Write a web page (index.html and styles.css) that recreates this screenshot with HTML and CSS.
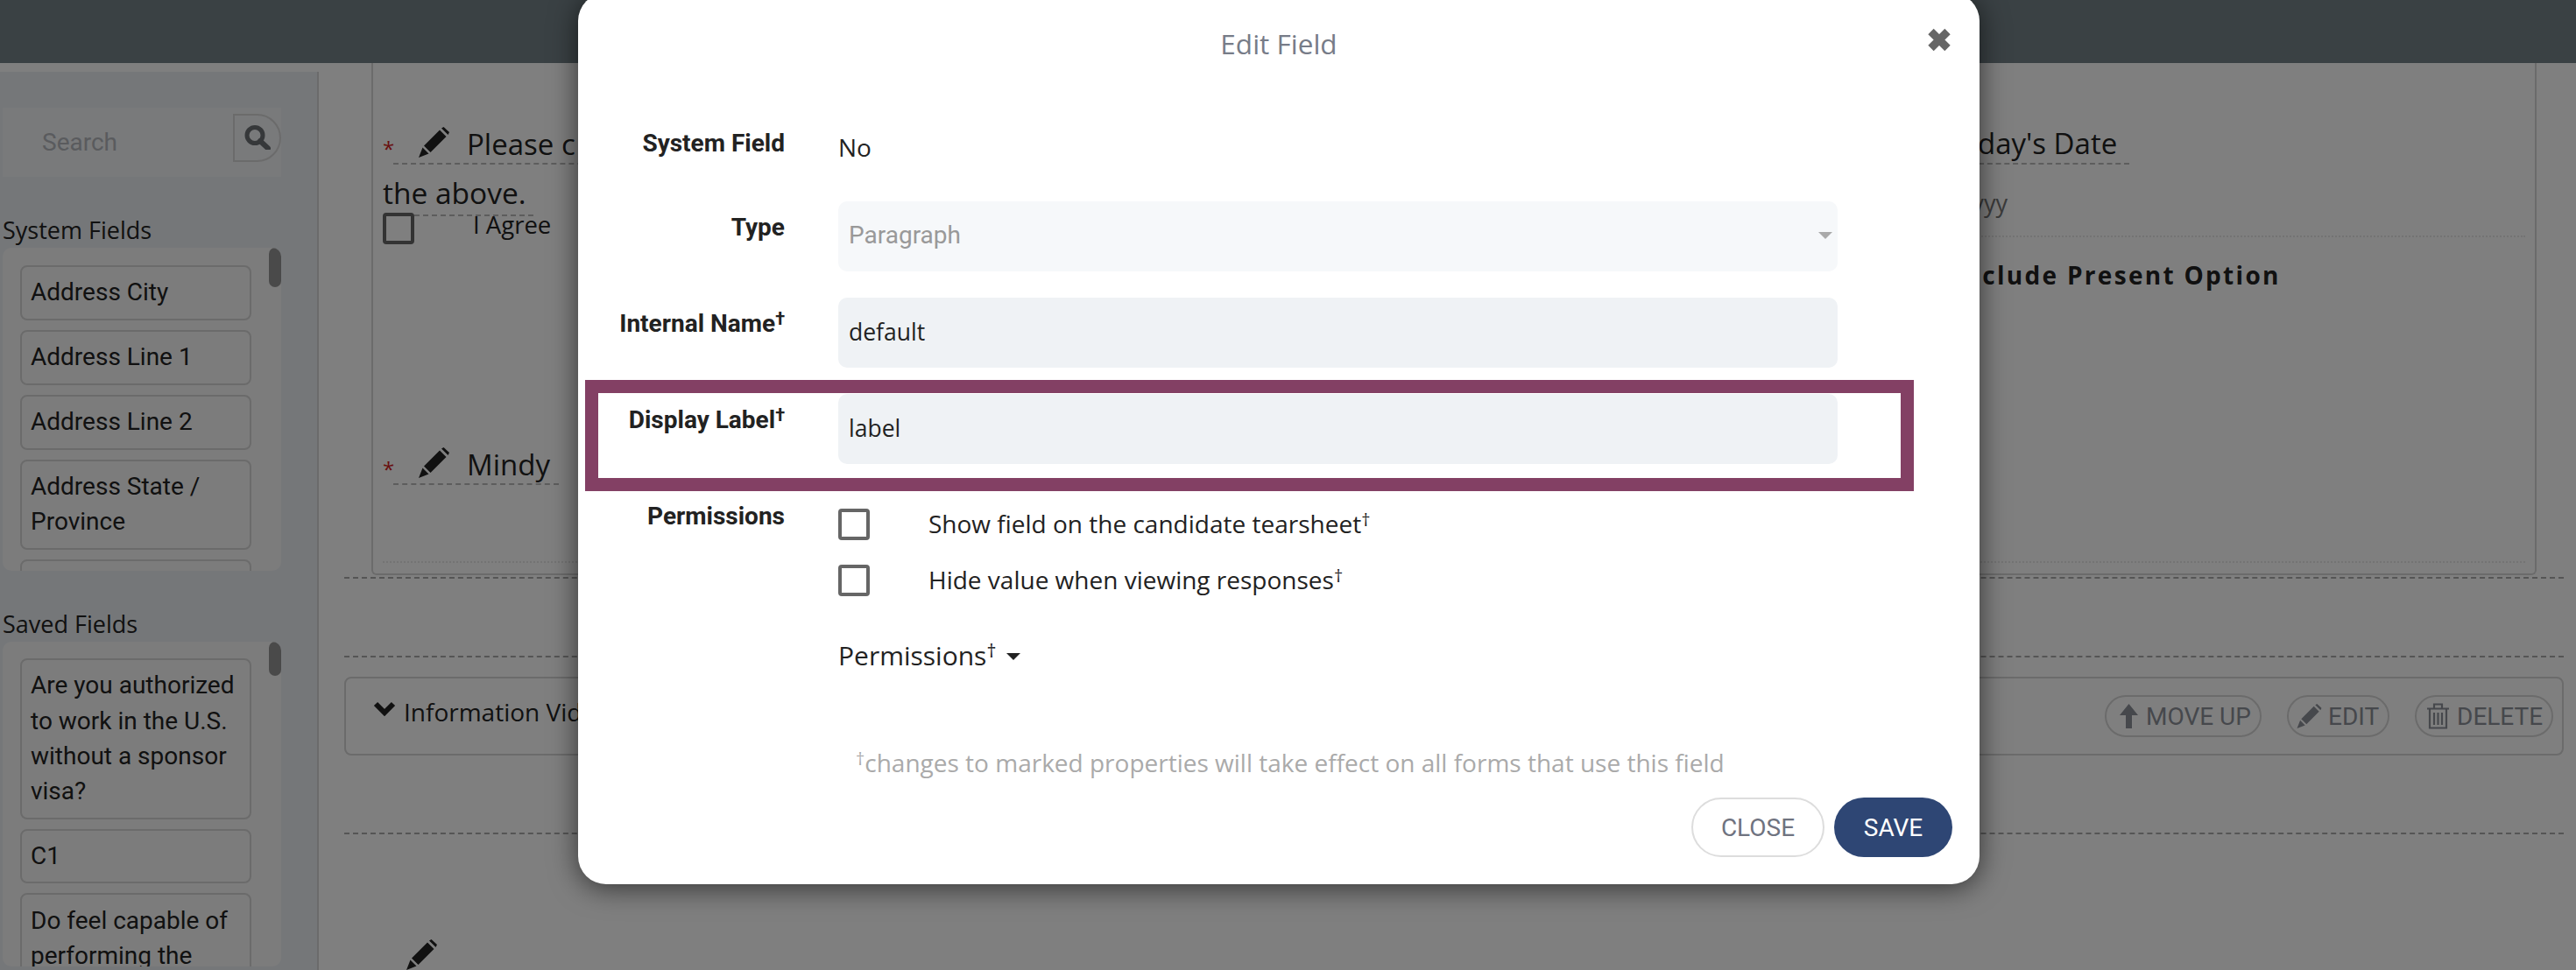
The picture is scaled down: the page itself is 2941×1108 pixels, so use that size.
FILE: index.html
```html
<!DOCTYPE html>
<html lang="en">
<head>
    <meta charset="UTF-8">
    <title>Edit Field</title>
    <link rel="stylesheet" href="styles.css">
</head>
<body>
    <header class="topbar"></header>

    <div class="page">
        <aside class="sidebar">
            <div class="search-box">
                <span class="search-text">Search</span>
                <span class="search-btn">
                    <svg width="30" height="28" viewBox="0 0 30 28"><circle cx="12" cy="11.5" r="9" fill="none" stroke="currentColor" stroke-width="5"/><path d="M18 18l9 8.5" fill="none" stroke="currentColor" stroke-width="6" stroke-linecap="round"/></svg>
                </span>
            </div>

            <h3 class="side-title">System Fields</h3>
            <div class="field-list">
                <span class="thumb"></span>
                <div class="field-item">Address City</div>
                <div class="field-item">Address Line 1</div>
                <div class="field-item">Address Line 2</div>
                <div class="field-item">Address State / Province</div>
                <div class="field-item field-clipped"></div>
            </div>

            <h3 class="side-title">Saved Fields</h3>
            <div class="field-list saved-list">
                <span class="thumb"></span>
                <div class="field-item">Are you authorized to work in the U.S. without a sponsor visa?</div>
                <div class="field-item">C1</div>
                <div class="field-item">Do feel capable of performing the</div>
            </div>
        </aside>

        <main class="main">
            <section class="section">
                <div class="form-box">
                    <div class="form-columns">
                        <div class="left-col">
                            <div class="question">
                                <span class="req">*</span>
                                <span class="question-line">
                                    <svg class="pencil" width="35" height="35" viewBox="0 0 35 35"><path d="M0 35l4.500-11.500 7 7zM6 21.500L24 3.500l7.500 7.500-18 18zM26 1.500L28.500 0 35 6l-1.500 3z"/></svg>
                                    <span class="question-text">Please c</span>
                                </span>
                            </div>
                            <div class="question-rest">the above.</div>
                            <div class="option">
                                <span class="checkbox"></span>
                                <span class="option-label">I Agree</span>
                            </div>
                            <div class="question second">
                                <span class="req">*</span>
                                <span class="question-line short">
                                    <svg class="pencil" width="35" height="35" viewBox="0 0 35 35"><path d="M0 35l4.500-11.500 7 7zM6 21.500L24 3.500l7.500 7.500-18 18zM26 1.500L28.500 0 35 6l-1.500 3z"/></svg>
                                    <span class="question-text">Mindy</span>
                                </span>
                            </div>
                        </div>
                        <div class="right-col">
                            <div class="date-title"><span class="date-label">Today's Date</span></div>
                            <div class="date-input">mm/dd/yyyy</div>
                            <div class="date-option">Include Present Option</div>
                        </div>
                    </div>
                </div>
            </section>

            <section class="section spacer"></section>

            <section class="section card-wrap">
                <div class="info-card">
                    <div class="card-title">
                        <svg width="26" height="17" viewBox="0 0 26 17"><path d="M3 3l10 10L23 3" fill="none" stroke="currentColor" stroke-width="6"/></svg>
                        <span>Information Vid</span>
                    </div>
                    <div class="card-actions">
                        <span class="pill pill-move">
                            <svg width="21" height="28" viewBox="0 0 21 28"><path d="M10.500 0L21 13h-7v15H7V13H0z"/></svg>
                            MOVE UP
                        </span>
                        <span class="pill pill-edit">
                            <svg width="29" height="28" viewBox="0 0 35 35"><path d="M0 35l4.500-11.500 7 7zM6 21.500L24 3.500l7.500 7.500-18 18zM26 1.500L28.500 0 35 6l-1.500 3z"/></svg>
                            EDIT
                        </span>
                        <span class="pill pill-delete">
                            <svg width="25" height="30" viewBox="0 0 25 30"><path d="M0 6.500h25M8 6V1.500h9V6M3 7v21.500h19V7M8 11v14M12.500 11v14M17 11v14" fill="none" stroke="currentColor" stroke-width="2.200"/></svg>
                            DELETE
                        </span>
                    </div>
                </div>
            </section>

            <div class="bottom-row">
                <svg class="pencil" width="35" height="35" viewBox="0 0 35 35"><path d="M0 35l4.500-11.500 7 7zM6 21.500L24 3.500l7.500 7.500-18 18zM26 1.500L28.500 0 35 6l-1.500 3z"/></svg>
            </div>
        </main>
    </div>

    <div class="overlay"></div>

    <div class="modal">
        <div class="modal-title">Edit Field</div>
        <span class="modal-x">
            <svg width="28" height="27" viewBox="0 0 28 27"><path d="M4.500 4l19 19M23.500 4l-19 19" fill="none" stroke="currentColor" stroke-width="9"/></svg>
        </span>

        <div class="row row-first">
            <label class="row-label">System Field</label>
            <div class="row-value">No</div>
        </div>
        <div class="row">
            <label class="row-label">Type</label>
            <div class="control select">Paragraph<span class="select-arrow"></span></div>
        </div>
        <div class="row">
            <label class="row-label">Internal Name<sup>†</sup></label>
            <div class="control">default</div>
        </div>
        <div class="row">
            <label class="row-label">Display Label<sup>†</sup></label>
            <div class="control">label</div>
        </div>
        <div class="row">
            <label class="row-label">Permissions</label>
            <div class="checks">
                <div class="check-row"><span class="checkbox"></span><span class="check-text">Show field on the candidate tearsheet<sup>†</sup></span></div>
                <div class="check-row"><span class="checkbox"></span><span class="check-text">Hide value when viewing responses<sup>†</sup></span></div>
                <div class="perm-toggle"><span>Permissions<sup>†</sup></span><span class="caret"></span></div>
                <div class="note"><sup>†</sup>changes to marked properties will take effect on all forms that use this field</div>
            </div>
        </div>

        <div class="modal-footer">
            <button class="btn btn-close">CLOSE</button>
            <button class="btn btn-save">SAVE</button>
        </div>

        <div class="callout"></div>
    </div>
</body>
</html>
```
FILE: styles.css
```css
/* Basic reset */
* {
    margin: 0;
    padding: 0;
    box-sizing: border-box;
}

body {
    width: 2941px;
    height: 1108px;
    overflow: hidden;
    position: relative;
    background-color: #fff;
    color: #222;
    font-family: "Open Sans", sans-serif;
    font-size: 28px;
}

sup {
    font-size: 72%;
    line-height: 0;
    vertical-align: 0.42em;
}

.topbar {
    height: 72px;
    background-color: #748288;
}

.page {
    display: flex;
    height: 1036px;
}

/* Left sidebar */
.sidebar {
    width: 364px;
    flex-shrink: 0;
    margin-top: 10px;
    padding: 41px 41px 0 3px;
    background-color: #eaeef3;
    border-right: 2px solid #d6d6d6;
    font-family: Roboto, sans-serif;
}

.search-box {
    display: flex;
    align-items: center;
    justify-content: space-between;
    height: 79px;
    background-color: #f2f4f7;
    padding-left: 45px;
}

.search-text {
    color: #b4b7bc;
    font-size: 28px;
}

.search-btn {
    display: flex;
    align-items: center;
    justify-content: center;
    width: 55px;
    height: 55px;
    margin-top: -11px;
    border: 2px solid #d6d6d6;
    border-radius: 0 50% 50% 0;
    color: #6c7074;
}

.side-title {
    height: 40px;
    margin-top: 41px;
    line-height: 40px;
    font-family: "Open Sans", sans-serif;
    font-size: 27px;
    font-weight: 400;
}

.field-list {
    position: relative;
    height: 369px;
    padding: 20px 34px 0 20px;
    overflow: hidden;
    background-color: #f9f9f9;
    border-radius: 10px;
}

.saved-list {
    height: 371px;
    padding-top: 19px;
}

.thumb {
    position: absolute;
    top: 0;
    right: 0;
    width: 14px;
    height: 45px;
    border-radius: 7px;
    background-color: #959595;
}

.saved-list .thumb {
    height: 39px;
}

.field-item {
    margin-bottom: 11px;
    padding: 9.35px 10px;
    border: 2px solid #d6d6d6;
    border-radius: 8px;
    font-size: 28px;
    line-height: 40.2px;
}

.field-clipped {
    height: 63px;
}

/* Main column */
.main {
    flex: 1;
    padding: 0 14px 0 29px;
}

.section {
    border-bottom: 2px dashed #aaa;
}

.form-box {
    height: 585px;
    margin: 0 31px 2px;
    padding: 0 11px;
    border: 2px solid #d6d6d6;
    border-top: none;
    border-radius: 0 0 6px 6px;
}

.form-columns {
    display: flex;
    justify-content: space-between;
    height: 571px;
    padding-top: 70px;
    border-bottom: 2px dotted #e6e6e6;
}

.left-col {
    width: 1100px;
}

.question {
    display: flex;
    align-items: flex-start;
}

.req {
    width: 12px;
    margin-top: 5px;
    color: #d21f1f;
    font-size: 24px;
    line-height: 46px;
}

.question-line {
    display: flex;
    flex: 1;
    align-items: center;
    height: 46px;
    padding-left: 29px;
    border-bottom: 2px dashed #bbb;
}

.question-line.short {
    flex: none;
    width: 189px;
}

.pencil {
    flex-shrink: 0;
    margin-top: -4px;
    fill: #222;
}

.question-text {
    margin-left: 20px;
    font-size: 33px;
    white-space: nowrap;
}

.question-rest {
    height: 50px;
    padding-top: 2px;
    font-size: 33.5px;
    line-height: 50px;
}

.option {
    display: flex;
    align-items: flex-start;
    height: 36px;
}

.option-label {
    width: 136px;
    height: 36px;
    padding-left: 67px;
    margin-top: 2px;
    border-top: 2px dashed #bbb;
    font-size: 27.5px;
    line-height: 20px;
    white-space: nowrap;
}

.checkbox {
    display: inline-block;
    flex-shrink: 0;
    width: 36px;
    height: 36px;
    border: 4px solid #666;
    border-radius: 4px;
}

.question.second {
    margin-top: 229px;
}

.right-col {
    width: 780px;
}

.date-title {
    height: 46px;
    padding-left: 117px;
}

.date-label {
    display: inline-block;
    height: 46px;
    padding-right: 14px;
    border-bottom: 2px dashed #bbb;
    font-size: 33px;
    line-height: 44px;
    white-space: nowrap;
}

.date-input {
    height: 83px;
    padding: 21px 0 0 32px;
    border-bottom: 2px dotted #e6e6e6;
    color: #777;
    font-size: 27px;
    line-height: 46px;
}

.date-option {
    margin-top: 24px;
    padding-left: 128px;
    font-size: 28px;
    font-weight: 700;
    letter-spacing: 2.3px;
    white-space: nowrap;
}

.spacer {
    height: 90px;
}

.card-wrap {
    height: 202px;
    padding-top: 22px;
}

.info-card {
    display: flex;
    align-items: center;
    justify-content: space-between;
    height: 90px;
    padding: 0 10px 0 31px;
    border: 2px solid #d6d6d6;
    border-radius: 8px;
}

.card-title {
    display: flex;
    align-items: center;
    gap: 9px;
    margin-top: -10px;
    font-size: 28px;
}

.card-title svg {
    margin-top: -8px;
}

.card-actions {
    display: flex;
    gap: 29px;
}

.pill {
    display: flex;
    align-items: center;
    height: 48px;
    border: 2px solid #d6d6d6;
    border-radius: 24px;
    color: #8c9099;
    font-family: Roboto, sans-serif;
    font-size: 28px;
    fill: #8c9099;
    white-space: nowrap;
}

.pill-move {
    width: 179px;
    padding-left: 15px;
    gap: 9px;
}

.pill-edit {
    width: 117px;
    padding-left: 9px;
    gap: 7px;
}

.pill-delete {
    width: 158px;
    padding-left: 12px;
    gap: 9px;
}

.bottom-row {
    padding: 120px 0 0 71px;
}

.bottom-row .pencil {
    margin-top: 0;
}

/* Overlay and modal */
.overlay {
    position: absolute;
    top: 0;
    left: 0;
    width: 100%;
    height: 100%;
    background-color: rgba(0, 0, 0, 0.5);
}

.modal {
    position: absolute;
    top: -8px;
    left: 660px;
    width: 1600px;
    height: 1018px;
    background-color: #fff;
    border-radius: 32px;
    box-shadow: 0 4px 32px rgba(0, 0, 0, 0.6);
}

.modal-title {
    height: 116px;
    padding-top: 36px;
    text-align: center;
    color: #777c88;
    font-size: 31.5px;
    line-height: 44px;
}

.modal-x {
    position: absolute;
    top: 40px;
    right: 32px;
    color: #666;
    line-height: 0;
}

.row {
    display: grid;
    grid-template-columns: 236px 1141px;
    column-gap: 61px;
    margin-top: 30px;
}

.row-first {
    height: 66px;
    margin-top: 26px;
}

.row-label {
    padding-top: 10px;
    text-align: right;
    font-family: Roboto, sans-serif;
    font-size: 28px;
    font-weight: 700;
    line-height: 40px;
    white-space: nowrap;
}

.row-value {
    padding-top: 14px;
    line-height: 40px;
}

.control {
    position: relative;
    height: 80px;
    padding-left: 12px;
    background-color: #eff2f5;
    border-radius: 10px;
    font-size: 26.5px;
    line-height: 78px;
}

.select {
    background-color: #f6f8fa;
    color: #999;
    font-family: Roboto, sans-serif;
    font-size: 28px;
}

.select-arrow {
    position: absolute;
    top: 35px;
    right: 6px;
    border-top: 8px solid #aaa;
    border-left: 8px solid transparent;
    border-right: 8px solid transparent;
}

.checks {
    padding-top: 21px;
}

.check-row {
    display: flex;
    align-items: center;
    height: 36px;
    margin-bottom: 28px;
    font-size: 28px;
    line-height: 32px;
    white-space: nowrap;
}

.check-row .checkbox {
    margin-right: 67px;
}

.check-text {
    padding-bottom: 3px;
}

.perm-toggle {
    display: flex;
    align-items: center;
    height: 44px;
    margin-top: 45px;
    font-size: 30px;
}

.caret {
    margin: 4px 0 0 12px;
    border-top: 8px solid #222;
    border-left: 8px solid transparent;
    border-right: 8px solid transparent;
}

.note {
    height: 40px;
    margin: 81px 0 0 20px;
    color: #aaa;
    font-size: 28px;
    line-height: 40px;
    white-space: nowrap;
}

.modal-footer {
    display: flex;
    justify-content: flex-end;
    gap: 11px;
    margin-top: 20px;
    padding-right: 31px;
}

.btn {
    height: 68px;
    border-radius: 34px;
    font-family: Roboto, sans-serif;
    font-size: 28px;
}

.btn-close {
    width: 152px;
    background-color: #fff;
    border: 2px solid #ddd;
    color: #6f7380;
}

.btn-save {
    width: 135px;
    background-color: #2e4674;
    border: none;
    color: #fff;
}

/* Maroon highlight drawn over the Display Label row */
.callout {
    position: absolute;
    top: 442px;
    left: 8px;
    width: 1517px;
    height: 127px;
    border: 15px solid #834064;
}
```
